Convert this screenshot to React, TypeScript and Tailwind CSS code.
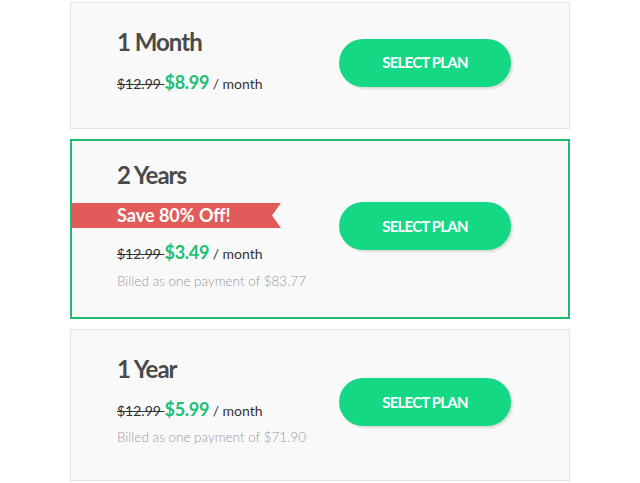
const plans = [
  { name: "1 Month", price: "$8.99", billed: null as string | null, ribbon: null as string | null, featured: false },
  { name: "2 Years", price: "$3.49", billed: "Billed as one payment of $83.77", ribbon: "Save 80% Off!", featured: true },
  { name: "1 Year", price: "$5.99", billed: "Billed as one payment of $71.90", ribbon: null, featured: false },
];

function Ribbon({ text }: { text: string }) {
  return (
    <div className="-ml-[45px] mt-[13px] flex h-[25px]">
      <div className="flex h-[25px] w-[200px] items-center bg-[#e15b5b] pl-[45px] text-[18px] font-bold leading-[25px] text-white">
        {text}
      </div>
      <svg width="9" height="25" viewBox="0 0 9 25" className="block">
        <polygon points="0,0 9,0 0,12.5 9,25 0,25" fill="#e15b5b" />
      </svg>
    </div>
  );
}

export default function App() {
  return (
    <main className="min-h-screen bg-white pt-[2px] font-['Lato','Liberation_Sans',sans-serif]">
      <div className="mx-auto flex w-[500px] flex-col gap-[10px]">
        {plans.map((plan) => (
          <section
            key={plan.name}
            className={
              plan.featured
                ? "flex items-center justify-between border-2 border-[#21b96f] bg-[#f9f9f9] pl-[45px] pr-[57px]"
                : "flex items-center justify-between border border-[#e3e3e3] bg-[#f9f9f9] pl-[46px] pr-[58px]"
            }
          >
            <div className={plan.featured ? "pb-[26px] pt-[19px]" : plan.billed ? "pb-[33px] pt-[24px]" : "pb-[32px] pt-[24px]"}>
              <h2 className="text-[24px] font-bold leading-[30px] tracking-[-1px] text-[#4a4a4a]">{plan.name}</h2>
              {plan.ribbon && <Ribbon text={plan.ribbon} />}
              <p className={plan.ribbon ? "mt-[12px] text-[14px] leading-[24px] text-[#333]" : "mt-[13px] text-[14px] leading-[24px] text-[#333]"}>
                <s>$12.99 </s>
                <span className="text-[18px] font-bold tracking-[-0.3px] text-[#1fbf75]">{plan.price}</span> / month
              </p>
              {plan.billed && (
                <p className={plan.ribbon ? "mt-[5px] text-[13.5px] font-light leading-[20px] text-[#9a9a9a]" : "mt-[4px] text-[13.5px] font-light leading-[20px] text-[#9a9a9a]"}>
                  {plan.billed}
                </p>
              )}
            </div>
            <button className="mb-[6px] h-[48px] w-[172px] rounded-full bg-[#15d885] text-[15px] font-bold tracking-[-0.8px] text-white shadow-[2px_2px_2px_rgba(0,0,0,0.12)]">
              SELECT PLAN
            </button>
          </section>
        ))}
      </div>
    </main>
  );
}
